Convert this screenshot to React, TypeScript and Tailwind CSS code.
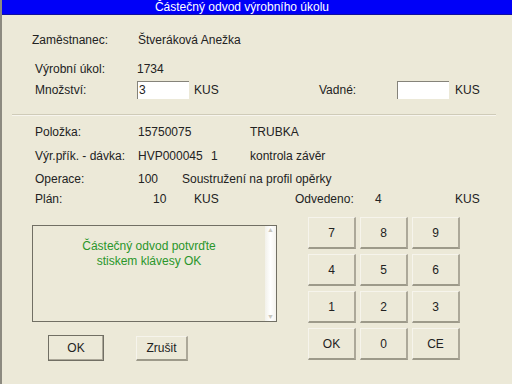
import React from 'react';

const keys = ['7', '8', '9', '4', '5', '6', '1', '2', '3', 'OK', '0', 'CE'];

const KeyButton: React.FC<{ label: string }> = ({ label }) => (
  <div className="w-[48px] h-[32px] flex items-center justify-center bg-[#ece9d8] border-t border-l border-[#f6f4ec] border-r-2 border-b-2 border-r-[#aca899] border-b-[#9d9a8a] text-[12px] text-[#222]">
    {label}
  </div>
);

const App: React.FC = () => {
  return (
    <div className="w-[512px] h-[384px] bg-[#ece9d8] border-l-2 border-[#8c8a80] font-['Liberation_Sans',Arial,sans-serif] text-[12px] text-[#222] overflow-hidden">
      {/* title bar */}
      <div className="h-[15px] bg-[#0000f8] border-b border-[#1010a0] text-white text-[12px] leading-[14px] text-center pr-[30px]">
        Částečný odvod výrobního úkolu
      </div>

      {/* header info */}
      <div className="h-[16px] mt-[17px] flex items-center">
        <span className="pl-[30px] w-[136px]">Zaměstnanec:</span>
        <span>Štveráková Anežka</span>
      </div>
      <div className="h-[16px] mt-[13px] flex items-center">
        <span className="pl-[33px] w-[135px]">Výrobní úkol:</span>
        <span>1734</span>
      </div>
      <div className="h-[18px] mt-[4px] flex items-center">
        <span className="pl-[33px] w-[135px]">Množství:</span>
        <div className="w-[52px] h-[18px] bg-white border-l border-t border-[#85837a] pl-[1px] leading-[16px]">3</div>
        <span className="ml-[5px] w-[125px]">KUS</span>
        <span className="w-[78px]">Vadné:</span>
        <div className="w-[52px] h-[18px] bg-white border-l border-t border-[#85837a]"></div>
        <span className="ml-[6px]">KUS</span>
      </div>

      {/* separator */}
      <div className="mt-[15px] ml-[10px] w-[484px] h-[2px] border-t border-[#cfcbb8] border-b border-b-[#f7f5ee]"></div>

      {/* item info */}
      <div className="h-[16px] mt-[8px] flex items-center">
        <span className="pl-[33px] w-[136px]">Položka:</span>
        <span className="w-[112px]">15750075</span>
        <span>TRUBKA</span>
      </div>
      <div className="h-[16px] mt-[8px] flex items-center">
        <span className="pl-[33px] w-[136px]">Výr.přík. - dávka:</span>
        <span className="w-[73px]">HVP000045</span>
        <span className="w-[39px]">1</span>
        <span>kontrola závěr</span>
      </div>
      <div className="h-[16px] mt-[7px] flex items-center">
        <span className="pl-[33px] w-[136px]">Operace:</span>
        <span className="w-[44px]">100</span>
        <span>Soustružení na profil opěrky</span>
      </div>
      <div className="h-[16px] mt-[4px] flex items-center">
        <span className="pl-[33px] w-[151px]">Plán:</span>
        <span className="w-[41px]">10</span>
        <span className="w-[101px]">KUS</span>
        <span className="w-[80px]">Odvedeno:</span>
        <span className="w-[80px]">4</span>
        <span>KUS</span>
      </div>

      {/* lower area */}
      <div className="flex mt-[10px]">
        <div className="w-[276px]">
          <div className="ml-[30px] mt-[8px] w-[245px] h-[97px] border-[1.5px] border-[#716f64] flex">
            <div className="flex-1 flex flex-col items-center pt-[13px] text-[#2a962a] leading-[15px]">
              <span>Částečný odvod potvrďte</span>
              <span>stiskem klávesy OK</span>
            </div>
            <div className="w-[11px] h-full bg-gradient-to-r from-[#f2f1ea] via-white to-[#f4f3ee] flex flex-col justify-between items-center text-[#c8c6bc] text-[7px] leading-[8px]">
              <span>▲</span>
              <span>▼</span>
            </div>
          </div>
          <div className="flex mt-[13px]">
            <div className="ml-[46px] w-[56px] h-[26px] flex items-center justify-center border border-[#716f64] bg-[#ece9d8] shadow-[inset_-1px_-1px_0_#aca899]">
              OK
            </div>
            <div className="ml-[32px] mt-[1px] w-[52px] h-[25px] flex items-center justify-center bg-[#ece9d8] border-t border-l border-[#f6f4ec] border-r-2 border-b-2 border-r-[#aca899] border-b-[#9d9a8a]">
              Zrušit
            </div>
          </div>
        </div>
        <div className="ml-[30px] grid grid-cols-[48px_48px_48px] gap-x-[4px] gap-y-[4px]">
          {keys.map(k => (
            <KeyButton key={k} label={k} />
          ))}
        </div>
      </div>
    </div>
  );
};

export default App;
